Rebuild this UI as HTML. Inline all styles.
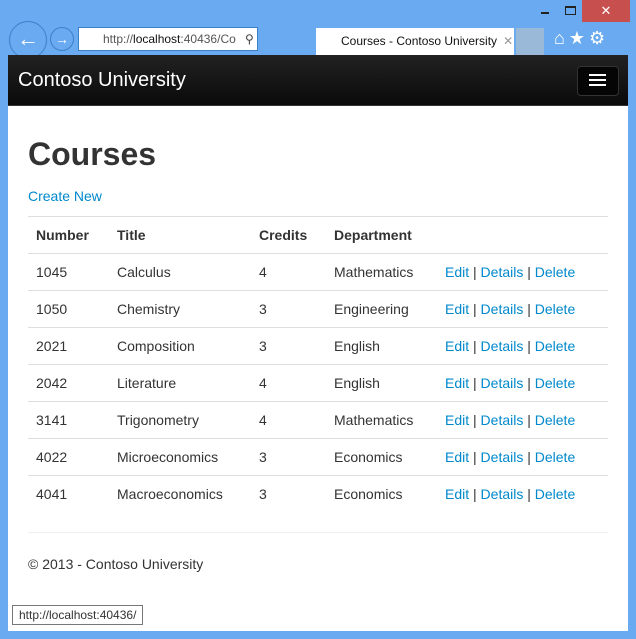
<!DOCTYPE html>
<html><head><style>
body{margin:0;width:636px;height:639px;background:#6aaaf0;position:relative;overflow:hidden;font-family:"Liberation Sans",sans-serif;}
.abs{position:absolute}
.content{left:8px;top:55px;width:620px;height:576px;background:#fff}
.nav{left:8px;top:55px;width:620px;height:50px;background:linear-gradient(#222,#0a0a0a);border-bottom:1px solid #333}
a{color:#0088cc;text-decoration:none}
table{border-collapse:collapse;position:absolute;left:28px;top:216px;width:580px;font-size:14px;color:#333}
td,th{border-top:1px solid #ddd;padding:0 8px;height:36px;text-align:left}
th{font-weight:bold}
</style></head><body>
<div class="abs" style="left:582px;top:0;width:48px;height:22px;background:#c7504f;color:#fff;text-align:center;font-size:13px;line-height:22px">✕</div>
<div class="abs" style="left:541px;top:12px;width:8px;height:2px;background:#222"></div>
<div class="abs" style="left:565px;top:6px;width:9px;height:6px;border:1px solid #222;border-top-width:2px"></div>
<div class="abs" style="left:9px;top:21px;width:36px;height:36px;border:1px solid #3d7fc8;border-radius:50%;color:#fff;font-size:22px;text-align:center;line-height:34px">←</div>
<div class="abs" style="left:50px;top:27px;width:22px;height:22px;border:1px solid #3d7fc8;border-radius:50%;color:#fff;font-size:14px;text-align:center;line-height:22px">→</div>
<div class="abs" style="left:78px;top:27px;width:178px;height:22px;background:#fff;border:1px solid #3d7fc8;font-size:12px;line-height:22px;color:#555;overflow:hidden"><span style="margin-left:24px">http://<b style="color:#111;font-weight:normal">localhost</b>:40436/Co</span><span style="position:absolute;left:166px;color:#444">⚲ ▾</span></div>
<div class="abs" style="left:316px;top:28px;width:198px;height:27px;background:#fff;font-size:12px;line-height:27px;color:#111"><span style="margin-left:25px">Courses - Contoso University</span><span style="color:#999;margin-left:6px">✕</span></div>
<div class="abs" style="left:516px;top:28px;width:28px;height:27px;background:#9ab8d8"></div>
<div class="abs" style="left:554px;top:28px;color:#fff;font-size:18px;letter-spacing:4px">⌂★⚙</div>
<div class="abs content"></div>
<div class="abs nav"></div>
<div class="abs" style="left:18px;top:69px;color:#fff;font-size:20px">Contoso University</div>
<div class="abs" style="left:577px;top:66px;width:40px;height:28px;background:#050505;border:1px solid #333;border-radius:4px"></div>
<div class="abs" style="left:589px;top:74px;width:17px;height:2px;background:#fff;box-shadow:0 5px 0 #fff,0 10px 0 #fff"></div>
<div class="abs" style="left:28px;top:136px;font-size:32px;font-weight:bold;color:#333">Courses</div>
<div class="abs" style="left:28px;top:188px;font-size:14px"><a>Create New</a></div>
<table>
<tr><th style="width:65px">Number</th><th style="width:126px">Title</th><th style="width:59px">Credits</th><th style="width:95px">Department</th><th></th></tr>
<tr><td>1045</td><td>Calculus</td><td>4</td><td>Mathematics</td><td><a>Edit</a> | <a>Details</a> | <a>Delete</a></td></tr>
<tr><td>1050</td><td>Chemistry</td><td>3</td><td>Engineering</td><td><a>Edit</a> | <a>Details</a> | <a>Delete</a></td></tr>
<tr><td>2021</td><td>Composition</td><td>3</td><td>English</td><td><a>Edit</a> | <a>Details</a> | <a>Delete</a></td></tr>
<tr><td>2042</td><td>Literature</td><td>4</td><td>English</td><td><a>Edit</a> | <a>Details</a> | <a>Delete</a></td></tr>
<tr><td>3141</td><td>Trigonometry</td><td>4</td><td>Mathematics</td><td><a>Edit</a> | <a>Details</a> | <a>Delete</a></td></tr>
<tr><td>4022</td><td>Microeconomics</td><td>3</td><td>Economics</td><td><a>Edit</a> | <a>Details</a> | <a>Delete</a></td></tr>
<tr><td>4041</td><td>Macroeconomics</td><td>3</td><td>Economics</td><td><a>Edit</a> | <a>Details</a> | <a>Delete</a></td></tr>
</table>
<div class="abs" style="left:28px;top:532px;width:580px;border-top:1px solid #eee"></div>
<div class="abs" style="left:28px;top:556px;font-size:14px;color:#333">© 2013 - Contoso University</div>
<div class="abs" style="left:12px;top:605px;border:1px solid #777;background:#fff;font-size:12px;padding:2px 6px;color:#333">http://localhost:40436/</div>
</body></html>
